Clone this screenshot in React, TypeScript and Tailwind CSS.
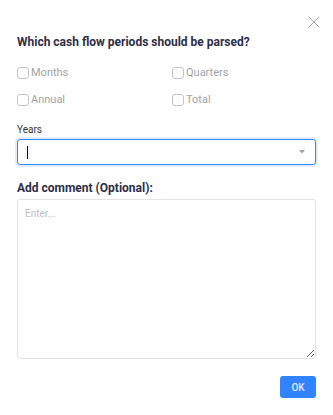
import { X } from 'lucide-react';

const periods = ['Months', 'Quarters', 'Annual', 'Total'];

function Checkbox({ label }: { label: string }) {
  return (
    <label className="flex h-[20px] items-center gap-[2px] text-[11px] text-[#a3a3a3]">
      <span className="h-[12px] w-[12px] rounded-[3px] border border-[#c4c4c4] bg-white" />
      <span>{label}</span>
    </label>
  );
}

export default function App() {
  return (
    <div
      className="relative h-[415px] w-[333px] bg-white px-[17px] pt-[34px]"
      style={{ fontFamily: 'Roboto, "Liberation Sans", sans-serif' }}
    >
      {/* Close */}
      <button className="absolute right-[9px] top-[12px] text-[#9a9a9a]">
        <X className="h-[20px] w-[20px]" strokeWidth={1.1} />
      </button>

      <h2 className="text-[12px] font-bold leading-[16px] text-[#2d2e45]">
        Which cash flow periods should be parsed?
      </h2>

      {/* Periods */}
      <div className="mt-[13px] grid grid-cols-[155px_1fr] gap-y-[7px]">
        {periods.map((p) => (
          <Checkbox key={p} label={p} />
        ))}
      </div>

      {/* Years */}
      <div className="mt-[13px] text-[10px] leading-[14px] text-[#333333]">Years</div>
      <div className="mt-[2px] flex h-[26px] items-center justify-between rounded-[3px] border border-[#2f86ff] pl-[9px] pr-[10px] shadow-[0_0_0_2px_rgba(47,134,255,0.15)]">
        <span className="h-[13px] w-px bg-black" />
        <svg width="6" height="4" viewBox="0 0 6 4">
          <path d="M0 0h6L3 3.5z" fill="#a0a0a0" />
        </svg>
      </div>

      {/* Comment */}
      <div className="mt-[15px] text-[12px] font-bold leading-[16px] text-[#2d2e45]">
        Add comment (Optional):
      </div>
      <textarea
        placeholder="Enter..."
        className="mt-[3px] block h-[160px] w-full rounded-[3px] border border-[#e3e3e3] px-[7px] py-[6px] text-[10px] text-[#333] outline-none placeholder:text-[#bdbdbd]"
      />

      {/* Actions */}
      <div className="mt-[17px] flex justify-end">
        <button className="h-[22px] w-[36px] rounded-[3px] bg-[#3283ff] text-[10px] font-medium text-[#e6efff]">
          OK
        </button>
      </div>
    </div>
  );
}
